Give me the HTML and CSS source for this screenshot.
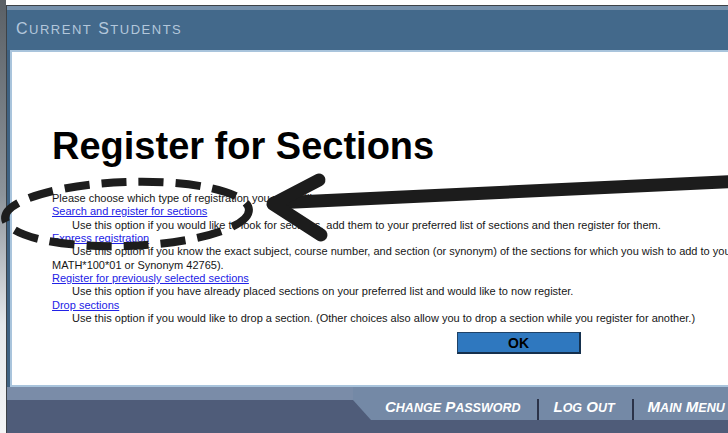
FILE: index.html
```html
<!DOCTYPE html>
<html lang="en">
<head>
<meta charset="utf-8">
<title>Register for Sections</title>
<link rel="stylesheet" href="styles.css">
</head>
<body>
<div class="screen">
  <div class="window">
    <header class="banner">
      <span class="banner-title">C<span class="sc">URRENT</span> S<span class="sc">TUDENTS</span></span>
    </header>
    <div class="frame">
      <main class="content">
        <h1 class="page-title">Register for Sections</h1>
        <div class="options">
          <p class="prompt">Please choose which type of registration you would like to use:</p>
          <a class="option-link" href="#">Search and register for sections</a>
          <p class="option-help">Use this option if you would like to look for sections, add them to your preferred list of sections and then register for them.</p>
          <a class="option-link" href="#">Express registration</a>
          <p class="option-help">Use this option if you know the exact subject, course number, and section (or synonym) of the sections for which you wish to add to your preferred list (e.g., MATH*100*01 or Synonym 42765).</p>
          <a class="option-link" href="#">Register for previously selected sections</a>
          <p class="option-help">Use this option if you have already placed sections on your preferred list and would like to now register.</p>
          <a class="option-link" href="#">Drop sections</a>
          <p class="option-help">Use this option if you would like to drop a section. (Other choices also allow you to drop a section while you register for another.)</p>
        </div>
        <div class="actions">
          <button class="ok-button" type="button">OK</button>
        </div>
      </main>
    </div>
    <footer class="footer">
      <nav class="nav-tab">
        <a class="nav-link" href="#">C<span class="sc">HANGE</span> P<span class="sc">ASSWORD</span></a>
        <a class="nav-link" href="#">L<span class="sc">OG</span> O<span class="sc">UT</span></a>
        <a class="nav-link" href="#">M<span class="sc">AIN</span> M<span class="sc">ENU</span></a>
      </nav>
    </footer>
  </div>

  <!-- hand-drawn markup over the form: dashed ring and pointer arrow -->
  <svg class="markup" width="728" height="433" viewBox="0 0 728 433" aria-hidden="true">
    <ellipse cx="127" cy="214" rx="122" ry="32" transform="rotate(-2 127 214)"
             fill="none" stroke="#1d1d1d" stroke-width="8" stroke-dasharray="25 12"/>
    <g fill="none" stroke="#1c1c1c" stroke-width="13" stroke-linecap="round" stroke-linejoin="round">
      <path d="M 745 181 L 274 203"/>
      <path d="M 319 180 L 273 204 L 321 235"/>
    </g>
  </svg>
</div>
</body>
</html>
```

FILE: styles.css
```css
* {
  box-sizing: border-box;
}

html,
body {
  margin: 0;
  padding: 0;
  width: 728px;
  height: 433px;
  overflow: hidden;
  background: #ffffff;
}

body {
  font-family: "Liberation Sans", Arial, sans-serif;
  color: #111;
}

.screen {
  position: relative;
  width: 728px;
  height: 433px;
  overflow: hidden;
  padding: 5px 0 0 6px;
  background: linear-gradient(to bottom, #5a6066 0%, #8d949b 45%, #e6e9ec 75%, #f4f5f6 100%);
  background-size: 6px 100%;
  background-repeat: no-repeat;
}

.window {
  display: flex;
  flex-direction: column;
  width: 900px;
  height: 440px;
  border-top: 1px solid #3d4247;
  border-left: 1px solid #3d4247;
  background: #44698b;
}

/* top banner */
.banner {
  height: 44px;
  flex: none;
  display: flex;
  align-items: flex-start;
  padding: 10px 0 0 9px;
  background: #43698b;
  border-top: 4px solid #7590ab;
}

.banner-title {
  font-size: 16px;
  line-height: 17px;
  letter-spacing: 1.5px;
  color: #b3c7db;
}

.banner-title .sc {
  font-size: 13px;
}

/* blue frame round the white page */
.frame {
  flex: none;
  padding-left: 3px;
  background: linear-gradient(to right, #3f6282, #4a6f91);
}

.content {
  height: 337px;
  padding: 75px 0 0 40px;
  background: #ffffff;
  border-top: 2px solid #a9c4dc;
  border-left: 2px solid #a9c4dc;
  border-bottom: 2px solid #a9c4dc;
}

.page-title {
  margin: 0;
  font-size: 38px;
  line-height: 38px;
  font-weight: bold;
  color: #000;
}

.options {
  width: 820px;
  margin-top: 27px;
  font-size: 11px;
  line-height: 13.33px;
  color: #161616;
}

.prompt,
.option-help {
  margin: 0;
}

.option-help {
  text-indent: 20px;
}

.option-link {
  display: block;
  color: #2222e6;
  text-decoration: underline;
}

.actions {
  padding: 7px 0 0 405px;
}

.ok-button {
  display: block;
  width: 124px;
  height: 22px;
  padding: 0;
  font-family: "Liberation Sans", Arial, sans-serif;
  font-size: 14px;
  font-weight: bold;
  color: #000;
  background: #2f78bf;
  border: 1px solid #1f4267;
  border-right: 2px solid #15304d;
  border-bottom: 2px solid #15304d;
}

/* bottom navigation */
.footer {
  flex: 1;
  display: flex;
  padding-left: 346px;
  background: linear-gradient(to bottom, #7a8ca8 0, #7a8ca8 13px, #4f5c79 13px, #4f5c79 100%);
}

.nav-tab {
  flex: 1;
  display: flex;
  align-items: flex-start;
  height: 33px;
  padding: 12px 0 0 32px;
  background: #7489a6;
  clip-path: polygon(0 0, 100% 0, 100% 100%, 18px 100%, 0 13px);
}

.nav-link {
  height: 21px;
  padding: 0 17px 5px 14px;
  font-size: 15px;
  line-height: 16px;
  font-weight: bold;
  font-style: italic;
  color: #ffffff;
  text-decoration: none;
  white-space: nowrap;
}

.nav-link .sc {
  font-size: 12.5px;
}

.nav-link:first-child {
  padding-left: 0;
}

.nav-link + .nav-link {
  border-left: 2px solid #2b3349;
}

/* annotation layer */
.markup {
  position: absolute;
  left: 0;
  top: 0;
  pointer-events: none;
}
```
